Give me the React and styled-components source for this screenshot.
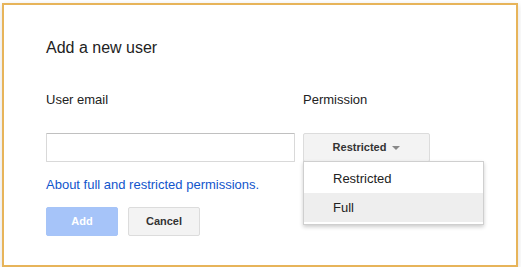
import React, { useState } from 'react';
import styled, { createGlobalStyle } from 'styled-components';

const GlobalStyle = createGlobalStyle`
  body {
    margin: 0;
    background: #ffffff;
    font-family: "Liberation Sans", Arial, sans-serif;
  }
`;

const Dialog = styled.div`
  box-sizing: border-box;
  margin: 3px 0 0 2px;
  width: 516px;
  height: 264px;
  border: 2px solid #e7b45a;
  background: #fff;
  box-shadow: 0 2px 6px rgba(0, 0, 0, 0.15);
  padding: 33px 0 0 42px;
`;

const Title = styled.h2`
  margin: 0;
  font-size: 16px;
  font-weight: normal;
  line-height: 20px;
  color: #222;
`;

const FormGrid = styled.div`
  display: grid;
  grid-template-columns: 249px 200px;
  column-gap: 8px;
  row-gap: 25px;
  margin-top: 34px;
`;

const Label = styled.div`
  font-size: 13px;
  line-height: 16px;
  color: #222;
`;

const EmailInput = styled.input`
  box-sizing: border-box;
  width: 249px;
  height: 29px;
  margin: 0;
  border: 1px solid #d9d9d9;
  border-top-color: #c0c0c0;
  border-radius: 1px;
  padding: 1px 8px;
  font-family: "Liberation Sans", Arial, sans-serif;
  font-size: 13px;
  outline: none;
`;

const SelectWrap = styled.div`
  position: relative;
`;

const Button = styled.button`
  box-sizing: border-box;
  height: 29px;
  min-width: ${(p) => p.$width || 72}px;
  margin: 0;
  padding: 0 8px 1px;
  border: 1px solid ${(p) => (p.$primary ? '#a6c4f7' : '#dcdcdc')};
  border-radius: 2px;
  background: ${(p) => (p.$primary ? '#a6c4f9' : '#f3f3f3')};
  color: ${(p) => (p.$primary ? '#fff' : '#333')};
  font-family: "Liberation Sans", Arial, sans-serif;
  font-size: 11px;
  font-weight: bold;
  display: inline-flex;
  align-items: center;
  justify-content: center;
  gap: 6px;
  cursor: pointer;
`;

const Arrow = styled.span`
  width: 0;
  height: 0;
  border-left: 4px solid transparent;
  border-right: 4px solid transparent;
  border-top: 4px solid #888;
  margin-top: 1px;
`;

const Menu = styled.ul`
  position: absolute;
  top: 28px;
  left: 0;
  box-sizing: border-box;
  width: 181px;
  margin: 0;
  padding: 0 0 2px;
  list-style: none;
  background: #fff;
  border: 1px solid #cfcfcf;
  box-shadow: 0 2px 4px rgba(0, 0, 0, 0.2);
  z-index: 2;
`;

const MenuItem = styled.li`
  height: ${(p) => p.$h}px;
  line-height: ${(p) => p.$h}px;
  padding: ${(p) => p.$top}px 0 0 29px;
  font-size: 13px;
  color: #222;
  background: ${(p) => (p.$active ? '#eeeeee' : 'transparent')};
  cursor: default;
`;

const HelpLink = styled.a`
  display: block;
  margin-top: 15px;
  font-size: 13px;
  line-height: 16px;
  color: #1155cc;
  text-decoration: none;
`;

const Actions = styled.div`
  display: flex;
  gap: 10px;
  margin-top: 14px;
`;

export default function App() {
  const [email, setEmail] = useState('');
  const [permission, setPermission] = useState('Restricted');
  const [hover, setHover] = useState('Full');

  return (
    <>
      <GlobalStyle />
      <Dialog>
        <Title>Add a new user</Title>
        <FormGrid>
          <Label>User email</Label>
          <Label>Permission</Label>
          <EmailInput value={email} onChange={(e) => setEmail(e.target.value)} />
          <SelectWrap>
            <Button $width={127}>
              {permission}
              <Arrow />
            </Button>
            <Menu>
              {['Restricted', 'Full'].map((opt, i) => (
                <MenuItem
                  key={opt}
                  $h={i === 0 ? 28 : 29}
                  $top={i === 0 ? 3 : 0}
                  $active={hover === opt}
                  onMouseEnter={() => setHover(opt)}
                  onClick={() => setPermission(opt)}
                >
                  {opt}
                </MenuItem>
              ))}
            </Menu>
          </SelectWrap>
        </FormGrid>
        <HelpLink href="#">About full and restricted permissions.</HelpLink>
        <Actions>
          <Button $primary disabled>Add</Button>
          <Button>Cancel</Button>
        </Actions>
      </Dialog>
    </>
  );
}
